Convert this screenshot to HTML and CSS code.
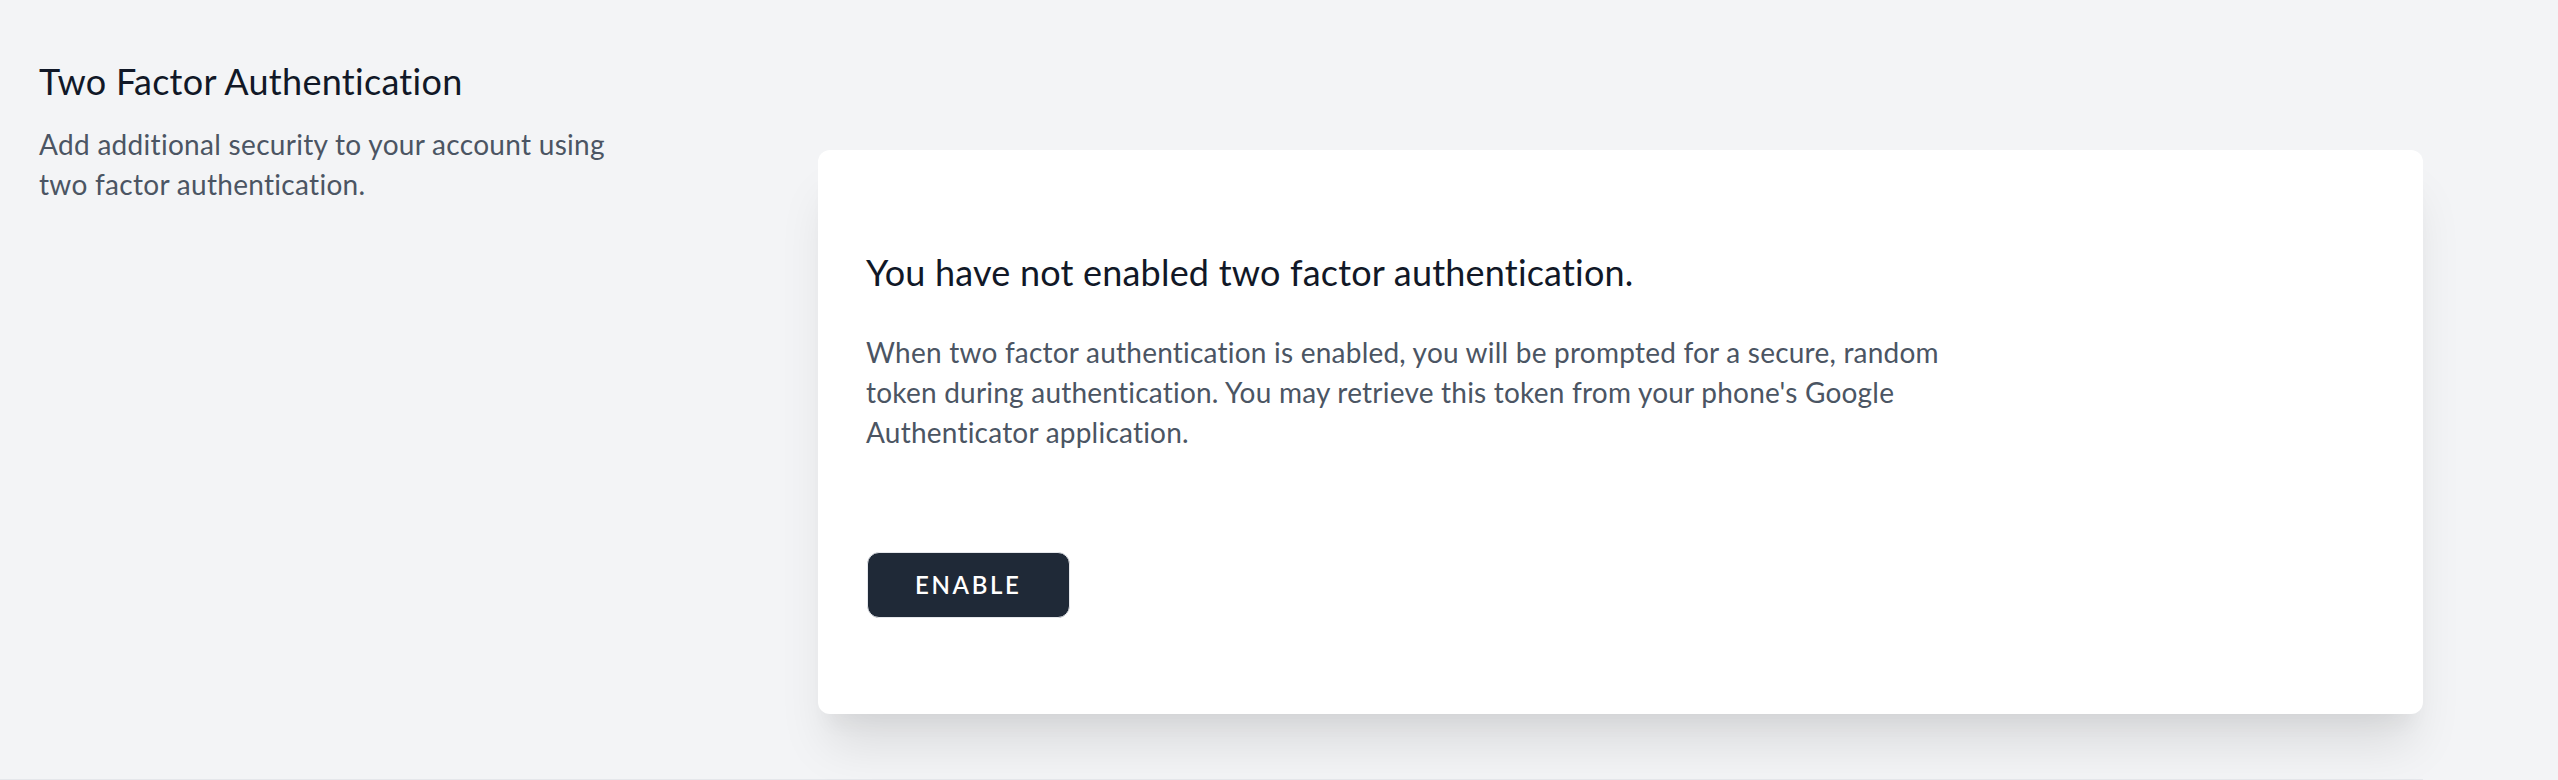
FILE: index.html
```html
<!DOCTYPE html>
<html lang="en">
<head>
<meta charset="utf-8">
<title>Two Factor Authentication</title>
<link rel="stylesheet" href="styles.css">
</head>
<body>
<div class="page">
  <div class="section">
    <div class="section-title">
      <h3 class="title">Two Factor Authentication</h3>
      <p class="subtitle">Add additional security to your account using two factor authentication.</p>
    </div>
    <div class="card">
      <h3 class="card-heading">You have not enabled two factor authentication.</h3>
      <div class="card-text">
        <p>When two factor authentication is enabled, you will be prompted for a secure, random token during authentication. You may retrieve this token from your phone's Google Authenticator application.</p>
      </div>
      <div class="card-actions">
        <button class="btn" type="button">Enable</button>
      </div>
    </div>
  </div>
  <div class="divider"></div>
</div>
</body>
</html>
```
FILE: styles.css
```css
* { box-sizing: border-box; }
html, body {
  margin: 0;
  padding: 0;
  background: #f3f4f6;
}
body {
  font-family: "Lato", "Noto Sans", sans-serif;
  color: #111827;
  -webkit-font-smoothing: antialiased;
}
.page {
  width: 2423px;
}
.section {
  display: grid;
  grid-template-columns: 794px 1fr;
  column-gap: 24px;
  align-items: start;
}
.section-title {
  padding: 53px 0 0 39px;
  max-width: 650px;
}
.title {
  margin: 0;
  font-size: 36px;
  line-height: 56px;
  font-weight: 400;
  letter-spacing: 0.28px;
  color: #111827;
}
.subtitle {
  margin: 15px 0 0;
  font-size: 28px;
  line-height: 40px;
  letter-spacing: 0.3px;
  color: #4b5563;
}
.card {
  margin-top: 150px;
  background: #ffffff;
  border-radius: 12px;
  padding: 94px 48px 96px;
  box-shadow: 0 40px 50px -10px rgba(0, 0, 0, 0.1), 0 20px 20px -10px rgba(0, 0, 0, 0.04);
}
.card-heading {
  margin: 0;
  font-size: 36px;
  line-height: 56px;
  font-weight: 400;
  letter-spacing: 0.2px;
  color: #111827;
}
.card-text {
  margin-top: 32px;
  max-width: 1130px;
  font-size: 28px;
  line-height: 40px;
  letter-spacing: 0.22px;
  color: #4b5563;
}
.card-text p { margin: 0; }
.card-actions {
  margin-top: 100px;
  display: flex;
}
.btn {
  font-family: inherit;
  display: inline-flex;
  align-items: center;
  justify-content: center;
  background: #1f2937;
  color: #ffffff;
  border: 1px solid #e5e7eb;
  border-radius: 12px;
  padding: 16px 48px 16px 47px;
  font-size: 24px;
  line-height: 32px;
  font-weight: 600;
  letter-spacing: 0.11em;
  text-transform: uppercase;
  margin-left: 1px;
}
.divider {
  margin-top: 65px;
  border-top: 2px solid #e5e7eb;
}
```
